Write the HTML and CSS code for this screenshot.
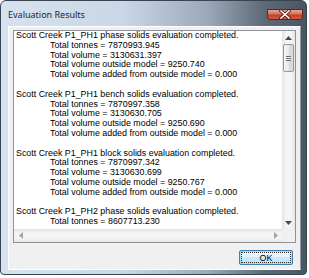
FILE: index.html
```html
<!DOCTYPE html>
<html lang="en">
<head>
  <meta charset="UTF-8">
  <title>Evaluation Results</title>
  <link rel="stylesheet" href="styles.css">
</head>
<body>
  <div class="window">
    <div class="titlebar">
      <span class="title">Evaluation Results</span>
      <div class="close">
        <svg width="12" height="9" viewBox="0 0 12 9">
          <path d="M2 1 L10 8 M10 1 L2 8" stroke="#5a1a10" stroke-width="3.2" stroke-linecap="square"/>
          <path d="M2 1 L10 8 M10 1 L2 8" stroke="#fff" stroke-width="1.6" stroke-linecap="square"/>
        </svg>
      </div>
    </div>

    <div class="client">
      <div class="textbox">
        <div class="text">
          <div class="line">Scott Creek P1_PH1 phase solids evaluation completed.</div>
          <div class="line ind">Total tonnes = 7870993.945</div>
          <div class="line ind">Total volume = 3130631.397</div>
          <div class="line ind">Total volume outside model = 9250.740</div>
          <div class="line ind">Total volume added from outside model = 0.000</div>
          <div class="line"></div>
          <div class="line">Scott Creek P1_PH1 bench solids evaluation completed.</div>
          <div class="line ind">Total tonnes = 7870997.358</div>
          <div class="line ind">Total volume = 3130630.705</div>
          <div class="line ind">Total volume outside model = 9250.690</div>
          <div class="line ind">Total volume added from outside model = 0.000</div>
          <div class="line"></div>
          <div class="line">Scott Creek P1_PH1 block solids evaluation completed.</div>
          <div class="line ind">Total tonnes = 7870997.342</div>
          <div class="line ind">Total volume = 3130630.699</div>
          <div class="line ind">Total volume outside model = 9250.767</div>
          <div class="line ind">Total volume added from outside model = 0.000</div>
          <div class="line"></div>
          <div class="line">Scott Creek P1_PH2 phase solids evaluation completed.</div>
          <div class="line ind">Total tonnes = 8607713.230</div>
        </div>

        <div class="vscroll">
          <div class="arrow">
            <svg width="7" height="4" viewBox="0 0 7 4"><path d="M0 4 L3.5 0 L7 4 Z" fill="#4a4a4a"/></svg>
          </div>
          <div class="thumb"><span class="grip"></span></div>
          <div class="track"></div>
          <div class="arrow">
            <svg width="7" height="4" viewBox="0 0 7 4"><path d="M0 0 L3.5 4 L7 0 Z" fill="#4a4a4a"/></svg>
          </div>
        </div>

        <div class="hscroll">
          <div class="arrow">
            <svg width="4" height="7" viewBox="0 0 4 7"><path d="M4 0 L0 3.5 L4 7 Z" fill="#a3a3a3"/></svg>
          </div>
          <div class="track"></div>
          <div class="arrow">
            <svg width="4" height="7" viewBox="0 0 4 7"><path d="M0 0 L4 3.5 L0 7 Z" fill="#a3a3a3"/></svg>
          </div>
        </div>

        <div class="corner"></div>
      </div>

      <div class="buttons">
        <button class="ok">OK</button>
      </div>
    </div>
  </div>
</body>
</html>
```

FILE: styles.css
```css
body {
  margin: 0;
  background-color: #ffffff;
}

.window {
  box-sizing: border-box;
  width: 307px;
  height: 275px;
  border: 1px solid #3a4350;
  border-radius: 6px 6px 4px 4px;
  background: linear-gradient(to right, #d6e2ef 0%, #c9d7e6 40%, #9aa8b7 68%, #5e6a78 86%, #4b5562 100%);
  display: flex;
  flex-direction: column;
  padding: 0 5px 4px 7px;
}

.titlebar {
  height: 26px;
  display: flex;
  justify-content: space-between;
  align-items: flex-start;
}

.title {
  font-family: "Noto Sans", sans-serif;
  font-size: 9px;
  color: #1b2733;
  margin-top: 7px;
}

.close {
  box-sizing: border-box;
  width: 36px;
  height: 11px;
  margin-top: 8px;
  margin-right: -2px;
  border: 1px solid #5a2a22;
  border-radius: 0 0 3px 3px;
  background: linear-gradient(to bottom, #e8a493 0%, #d7735e 45%, #c2402a 55%, #cd5a3e 100%);
  display: flex;
  justify-content: center;
  align-items: center;
}

.client {
  flex: 1;
  background-color: #f0f0f0;
  border: 1px solid #ffffff;
  border-right-color: #8e9aa6;
  box-sizing: border-box;
  padding: 3px 4px 4px 4px;
  display: flex;
  flex-direction: column;
}

.textbox {
  box-sizing: border-box;
  height: 213px;
  border: 1px solid #8f9296;
  background-color: #ffffff;
  display: grid;
  grid-template-columns: 1fr 13px;
  grid-template-rows: 1fr 13px;
  overflow: hidden;
}

.text {
  overflow: hidden;
  padding: 0 0 0 2px;
  font-family: "Liberation Sans", Arial, sans-serif;
  font-size: 8.9px;
  line-height: 9.8px;
  color: #000000;
  white-space: nowrap;
}

.line {
  height: 9.8px;
}

.ind {
  padding-left: 34px;
}

.vscroll {
  display: flex;
  flex-direction: column;
  background: linear-gradient(to right, #e3e3e3, #f4f4f4 30%, #f4f4f4 70%, #e6e6e6);
}

.hscroll {
  display: flex;
  background: linear-gradient(to bottom, #e3e3e3, #f4f4f4 30%, #f4f4f4 70%, #e6e6e6);
}

.arrow {
  width: 13px;
  height: 13px;
  flex: none;
  display: flex;
  justify-content: center;
  align-items: center;
}

.track {
  flex: 1;
}

.thumb {
  box-sizing: border-box;
  height: 28px;
  margin: 0 1px;
  border: 1px solid #979797;
  border-radius: 2px;
  background: linear-gradient(to right, #f6f6f6, #e9e9e9 50%, #d8d8d8 55%, #dcdcdc);
  display: flex;
  justify-content: center;
  align-items: center;
}

.grip {
  width: 5px;
  height: 5px;
  background: repeating-linear-gradient(to bottom, #6e6e6e 0, #6e6e6e 1px, #eeeeee 1px, #eeeeee 2px);
}

.corner {
  background-color: #f0f0f0;
}

.buttons {
  display: flex;
  justify-content: flex-end;
  margin-top: 7px;
  padding-right: 3px;
}

.ok {
  box-sizing: border-box;
  width: 54px;
  height: 15px;
  padding: 0;
  border: 1px solid #3c7fb1;
  border-radius: 2px;
  background: linear-gradient(to bottom, #f2f9fd 0%, #e3f3fc 45%, #cfeafa 50%, #bde2f6 100%);
  box-shadow: inset 0 0 0 1px #a9dcf6;
  outline: 1px dotted #2a2a2a;
  outline-offset: -3px;
  font-family: "Liberation Sans", Arial, sans-serif;
  font-size: 8.9px;
  color: #000000;
}
```
